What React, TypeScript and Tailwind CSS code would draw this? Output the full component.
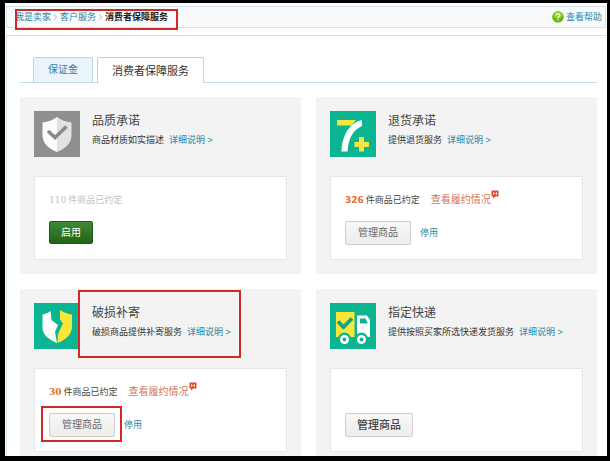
import type { ReactNode } from 'react';
import clsx from 'clsx';

interface Service {
  title: string;
  desc: string;
  icon: ReactNode;
  count?: number;
  countClass?: string;
  status: 'off' | 'on' | 'manage';
  marked?: boolean;
}

function ShieldCheckIcon() {
  return (
    <svg viewBox="0 0 46 46" className="block h-[46px] w-[46px] shrink-0" aria-hidden="true">
      <rect width="46" height="46" fill="#8f8f8f" />
      <path d="M23 6 C19 9 14 11 8.500 11.500 V25 C9 33 15 37.500 23 41 Z" fill="#fbfbfb" />
      <path d="M23 6 C27 9 32 11 37.500 11.500 V25 C37 33 31 37.500 23 41 Z" fill="#e2e2e2" />
      <path d="M14 20 L21 26.500 L32.500 15.500" fill="none" stroke="#8a8a8a" strokeWidth="3.600" />
    </svg>
  );
}

function SevenPlusIcon() {
  return (
    <svg viewBox="0 0 46 46" className="block h-[46px] w-[46px] shrink-0" aria-hidden="true">
      <rect width="46" height="46" fill="#0bb591" />
      <path d="M7 9 H26 L21.500 14.500 H7 Z" fill="#f6e63c" />
      <path d="M32 9 V15 C23 19 18.500 27 17.500 40.500 H11.500 C12 25 19 12 32 9 Z" fill="#fff" />
      <path d="M29 26 H34 V31 H39 V36 H34 V40.500 H29 V36 H24.500 V31 H29 Z" fill="#f6e63c" />
    </svg>
  );
}

function BrokenShieldIcon() {
  return (
    <svg viewBox="0 0 46 46" className="block h-[46px] w-[46px] shrink-0" aria-hidden="true">
      <rect width="46" height="46" fill="#0bb591" />
      <path d="M16.500 8 L17.500 17 L24 22 L21 29 L23 40 C14 36 9 32 8.500 25 V11.500 C12 11 14 10 16.500 8 Z" fill="#fff" />
      <path d="M26 7 C30 9.500 34 11 38 11.500 V25 C37 32 32 36.500 23.500 40 L24 31 L29 20.500 L26 16.500 Z" fill="#f8e63a" />
    </svg>
  );
}

function TruckIcon() {
  return (
    <svg viewBox="0 0 46 46" className="block h-[46px] w-[46px] shrink-0" aria-hidden="true">
      <rect width="46" height="46" fill="#0bb591" />
      <path d="M6 9 H24.500 V34 H6 Z" fill="#f8e63a" />
      <path d="M8 18.500 L13.500 24 L22 15.500" fill="none" stroke="#0ba583" strokeWidth="3.800" />
      <path d="M27 12.500 H37 L40 17 V34 H27 Z" fill="#fff" />
      <path d="M30 15.500 H35.500 L37.500 19.500 V20.500 H30 Z" fill="#0bb591" />
      <circle cx="14.500" cy="36" r="6.500" fill="#0bb591" />
      <circle cx="31.500" cy="36" r="6.500" fill="#0bb591" />
      <circle cx="14.500" cy="36.500" r="3.200" fill="none" stroke="#fff" strokeWidth="2.600" />
      <circle cx="31.500" cy="36.500" r="3.200" fill="none" stroke="#fff" strokeWidth="2.600" />
    </svg>
  );
}

function HotBadge() {
  return (
    <svg viewBox="0 0 8 9" className="absolute -top-1 left-full h-[9px] w-2" aria-hidden="true">
      <path d="M1 0.500 H7 Q7.500 0.500 7.500 1 V6.500 H4 L2 8.800 V6.500 H0.500 V1 Q0.500 0.500 1 0.500 Z" fill="#e0492a" />
      <path d="M2.500 2 V5 M5.500 2 V5 M2.500 3.500 H5.500" stroke="#fff" strokeWidth="0.700" />
    </svg>
  );
}

function HelpIcon() {
  return (
    <svg viewBox="0 0 12 12" className="block h-3 w-3" aria-hidden="true">
      <circle cx="6" cy="6" r="5.800" fill="#66b60f" />
      <ellipse cx="6" cy="4" rx="4.600" ry="3.400" fill="#8fd32f" />
      <path d="M4.200 4.600 C4.200 2 7.900 2.200 7.800 4.300 C7.700 5.600 6 5.600 6 7.200" fill="none" stroke="#fff" strokeWidth="1.200" />
      <rect x="5.400" y="8.200" width="1.300" height="1.300" fill="#fff" />
    </svg>
  );
}

function Chevron() {
  return (
    <svg viewBox="0 0 3 6" className="block h-[6px] w-[3px]" aria-hidden="true">
      <path d="M0.500 0.500 L2.500 3 L0.500 5.500" fill="none" stroke="#9db4c0" strokeWidth="0.900" />
    </svg>
  );
}

// Red outline drawn over the highlighted area
function Marker({ className }: { className: string }) {
  return <div className={clsx('pointer-events-none absolute border-2 border-[#cf2a2a]', className)} />;
}

const services: Service[] = [
  {
    title: '品质承诺',
    desc: '商品材质如实描述',
    icon: <ShieldCheckIcon />,
    count: 110,
    countClass: "font-['DejaVu_Serif'] text-[#c2c2c2]",
    status: 'off',
  },
  {
    title: '退货承诺',
    desc: '提供退货服务',
    icon: <SevenPlusIcon />,
    count: 326,
    countClass: "font-['DejaVu_Sans'] font-bold text-[#e8701e]",
    status: 'on',
  },
  {
    title: '破损补寄',
    desc: '破损商品提供补寄服务',
    icon: <BrokenShieldIcon />,
    count: 30,
    countClass: "font-['DejaVu_Serif'] font-bold text-[#e8701e]",
    status: 'on',
    marked: true,
  },
  {
    title: '指定快递',
    desc: '提供按照买家所选快递发货服务',
    icon: <TruckIcon />,
    status: 'manage',
  },
];

function ServiceCard({ service, last }: { service: Service; last: boolean }) {
  const off = service.status === 'off';

  return (
    <section className={clsx('bg-[#f3f3f3] px-[14px] pt-[14px]', last ? 'pb-1' : 'pb-[14px]')}>
      {/* Header */}
      <div className="relative flex gap-3">
        {service.icon}
        <div className="min-w-0">
          <h2 className="text-[12px] leading-5 text-[#444]">{service.title}</h2>
          <p className="mt-[3px] flex gap-[5px] whitespace-nowrap text-[#333]">
            {service.desc}
            <a href="#" className="text-[#1f87ab]">详细说明 &gt;</a>
          </p>
        </div>
        {service.marked && <Marker className="-top-[13px] left-11 h-[68px] w-[163px]" />}
      </div>

      {/* Status and actions */}
      <div className="mt-[19px] border border-[#e6e6e6] bg-white px-[14px] pt-[17px] pb-[14px]">
        <div className={clsx('flex h-3 items-center gap-[11px] whitespace-nowrap', off ? 'text-[#c2c2c2]' : 'text-[#444]')}>
          {service.count !== undefined && (
            <p className="flex items-center gap-[2px]">
              <span className={service.countClass}>{service.count}</span>
              件商品已约定
            </p>
          )}
          {service.status === 'on' && (
            <a href="#" className="relative text-[10px] text-[#d67558]">
              查看履约情况
              <HotBadge />
            </a>
          )}
        </div>
        <div className="mt-[15px] flex items-center gap-[9px]">
          {off ? (
            <button type="button" className="mb-px h-[23px] rounded-xs border border-[#1f5c17] bg-linear-to-b from-[#3f8a35] to-[#1f6418] px-[11px] text-[10px] text-white">
              启用
            </button>
          ) : (
            <div className="relative">
              <button
                type="button"
                className={clsx(
                  'block h-6 rounded-xs border border-[#cfcfcf] bg-linear-to-b from-[#f8f8f8] to-[#ececec]',
                  service.status === 'manage' ? 'px-[11px] text-[11px] font-medium text-[#444]' : 'px-3 text-[10px] text-[#666]'
                )}
              >
                管理商品
              </button>
              {service.marked && <Marker className="-top-[7px] -left-2 h-9 w-[81px]" />}
            </div>
          )}
          {service.status === 'on' && <a href="#" className="text-[#1f87ab]">停用</a>}
        </div>
      </div>
    </section>
  );
}

export default function App() {
  return (
    <div
      lang="zh-CN"
      className="min-h-screen bg-black pt-[3px] pr-[3px] pb-[5px] pl-[5px] font-['Liberation_Sans','Noto_Sans_CJK_SC',sans-serif] text-[9px] leading-3"
    >
      <div className="bg-white pt-[3px] pl-px">
        {/* Breadcrumb bar */}
        <header className="relative mr-px flex items-center justify-between border border-[#d3e3ec] bg-[#f8fafc] py-1 pr-[3px] pl-2">
          <nav className="flex items-center gap-[3px]">
            <a href="#" className="text-[#1f87ab]">我是卖家</a>
            <Chevron />
            <a href="#" className="text-[#1f87ab]">客户服务</a>
            <Chevron />
            <span className="font-bold text-[#222]">消费者保障服务</span>
          </nav>
          <a href="#" className="flex items-center gap-[2px] text-[#1f87ab]">
            <HelpIcon />
            查看帮助
          </a>
          <Marker className="top-[2px] left-2 h-[21px] w-[163px]" />
        </header>

        <main className="mt-[7px] border-t border-l border-[#d3e3ec] pt-[21px] pr-[10px] pl-[13px]">
          <div role="tablist" className="flex gap-1 border-b border-[#c3dde8] pl-[13px]">
            <button type="button" role="tab" aria-selected="false" className="h-[25px] rounded-t-xs border border-b-0 border-[#b5d6e4] bg-[#eaf4fa] px-[14px] text-[10px] text-[#1f87ab]">
              保证金
            </button>
            <button type="button" role="tab" aria-selected="true" className="-mb-px h-[26px] rounded-t-xs border border-b-0 border-[#b5d6e4] bg-white px-[14px] text-[11px] text-[#333]">
              消费者保障服务
            </button>
          </div>

          <div className="mt-[14px] grid grid-cols-2 gap-[15px]">
            {services.map((service, idx) => (
              <ServiceCard key={service.title} service={service} last={idx >= 2} />
            ))}
          </div>
        </main>
      </div>
    </div>
  );
}
